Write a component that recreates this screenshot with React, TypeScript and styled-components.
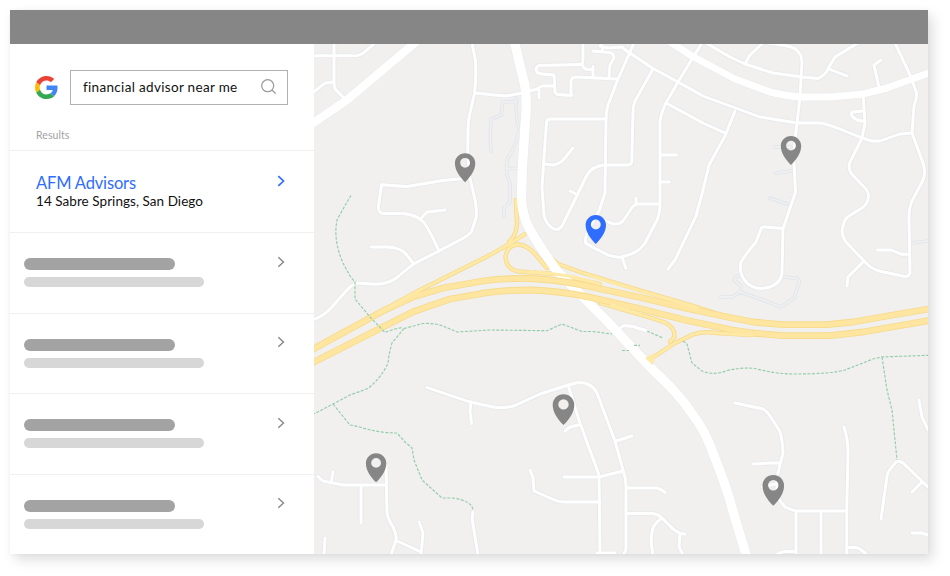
import React from "react";
import styled, { createGlobalStyle } from "styled-components";

const GlobalStyle = createGlobalStyle`
  * { box-sizing: border-box; }
  body {
    margin: 0;
    background: #fff;
    font-family: Lato, "Liberation Sans", sans-serif;
    overflow: hidden;
  }
`;

const Page = styled.div`
  height: 576px;
  padding: 10px 22px 22px 10px;
`;

const Window = styled.main`
  display: flex;
  flex-direction: column;
  height: 544px;
  background: #fff;
  box-shadow: 5px 6px 12px rgba(0, 0, 0, 0.13), 0 0 5px rgba(0, 0, 0, 0.04);
`;

const TitleBar = styled.header`
  flex: 0 0 34px;
  background: #868686;
`;

const Body = styled.div`
  flex: 1;
  display: grid;
  grid-template-columns: 304px 614px;
  min-height: 0;
`;

const Sidebar = styled.aside`
  display: flex;
  flex-direction: column;
  background: #fff;
`;

const SearchArea = styled.section`
  height: 106px;
  padding: 26px 26px 0 25px;
`;

const SearchRow = styled.div`
  display: flex;
  align-items: center;
  justify-content: space-between;
`;

const SearchBox = styled.div`
  display: flex;
  align-items: center;
  justify-content: space-between;
  width: 218px;
  height: 34.5px;
  padding: 0 11px 1px 12px;
  border: 1.5px solid #b1b1b1;
`;

const Label = styled.span<{ $size: number; $color: string; $spacing?: number; $line: number }>`
  font-size: ${(p) => p.$size}px;
  line-height: ${(p) => p.$line}px;
  letter-spacing: ${(p) => p.$spacing ?? 0}px;
  color: ${(p) => p.$color};
  white-space: nowrap;
`;

const ResultsHeading = styled.div`
  display: flex;
  padding: 23px 0 0 1px;
`;

const ResultRow = styled.article<{ $height: number; $inset: number; $top: number }>`
  display: flex;
  flex-shrink: 0;
  justify-content: space-between;
  height: ${(p) => p.$height}px;
  padding: ${(p) => p.$top}px 28px 0 ${(p) => p.$inset}px;
  border-top: 1.5px solid #f0f0f0;
`;

const Lines = styled.div<{ $gap: number }>`
  display: flex;
  flex-direction: column;
  gap: ${(p) => p.$gap}px;
`;

const Bar = styled.div<{ $width: number; $height: number; $color: string }>`
  width: ${(p) => p.$width}px;
  height: ${(p) => p.$height}px;
  border-radius: 6px;
  background: ${(p) => p.$color};
`;

const ChevronSlot = styled.div<{ $shift: number }>`
  margin-top: ${(p) => p.$shift}px;
  line-height: 0;
`;

const MapSvg = styled.svg`
  display: block;
  width: 614px;
  height: 510px;
  background: #f1f0ef;
`;

const Chevron = ({ color, width }: { color: string; width: number }) => (
  <svg width="10" height="12" viewBox="0 0 10 12" fill="none">
    <path d="M2.3 1.2 7.5 6 2.3 10.8" stroke={color} strokeWidth={width} />
  </svg>
);

const GoogleLogo = () => (
  <svg width="23" height="23" viewBox="0 0 48 48">
    <path fill="#EA4335" d="M24 9.5c3.54 0 6.71 1.22 9.21 3.6l6.85-6.85C35.9 2.38 30.47 0 24 0 14.62 0 6.51 5.38 2.56 13.22l7.98 6.19C12.43 13.72 17.74 9.5 24 9.5z" />
    <path fill="#4285F4" d="M46.98 24.55c0-1.57-.15-3.09-.38-4.55H24v9.02h12.94c-.58 2.96-2.26 5.48-4.78 7.18l7.73 6c4.51-4.18 7.09-10.36 7.09-17.65z" />
    <path fill="#FBBC05" d="M10.53 28.59c-.48-1.45-.76-2.99-.76-4.59s.27-3.14.76-4.59l-7.98-6.19C.92 16.46 0 20.12 0 24c0 3.88.92 7.54 2.56 10.78l7.97-6.19z" />
    <path fill="#34A853" d="M24 48c6.48 0 11.93-2.13 15.89-5.81l-7.73-6c-2.15 1.45-4.92 2.3-8.16 2.3-6.26 0-11.57-4.22-13.47-9.91l-7.98 6.19C6.51 42.62 14.62 48 24 48z" />
  </svg>
);

const SearchIcon = () => (
  <svg width="15" height="15" viewBox="0 0 15 15" fill="none" stroke="#9b9b9b" strokeWidth="1.25">
    <circle cx="6.7" cy="6.7" r="6" />
    <path d="m11 11 3.6 3.6" />
  </svg>
);

const streets = [
  "M314 55.7H352Q356 56.3 359 55L363 53.3 374 44",
  "M334 43V83Q334 88 336 90L344 98",
  "M314 92 323 84.5Q327 82 334 82",
  "M472 43 475.4 60Q476.2 70 475.5 82L474.5 93.5 469.5 115Q468 122 468 130L467.7 155 470 178 475.5 202Q477 213 476 218L471.5 231.7Q468 236 460 240L438 251.5 413.5 264 397 277.5Q391 282 383 283.5 376 284.5 368 283.8L358 283Q353 283.5 347 290L331 308Q325 315 314 319.5",
  "M474.5 93 505 96 523 93",
  "M468 178 443 180.5 407 186.5 381.5 184.8 378.3 207Q378.5 213.5 384 213.5H402Q415 214 423 221.5 428 227 439 251",
  "M420 219.5 427 212 445 210",
  "M371 247H388Q401 248 406 254L413 263",
  "M634 43 618 79 608 105Q606 112 606 120L605 193 599 211 588 231Q584 241 586 243.5 600 251 608 255 616 258 622 257 639 253 645 243L657 220Q660 213 660 203V122Q661 113 666 103L678 82 692 59 702 43",
  "M600 218Q608 222 613 224 620 224.5 623 221L631 209Q634 204 639 204H660M636 198V204M622 257 624 263 626 268.5",
  "M583 43V61Q583 64.5 580 64.5L539 65.5Q535 67 536.5 71 538 74 542 74L554 75 555 91Q555 94 558 94.5L572 95.5",
  "M528 91 536 89.5 542 86H554M539 89V98M571 95V82Q571 77 576 77L617 79M582 65 585 69 593 70M593 66.5V76.5",
  "M593 51 609 52.5Q614 53 614 58L610 65 609 77M601 43 603 51M600 46 608 48 622 47 630 54",
  "M624 49 653 68.5 678 82 703 96 760 117 797 123H821Q830 125 840 129L862 138 872 141H880L900 134 912 133",
  "M653 69 635 101Q633 106 633 113L631.7 162Q631 165 628 165H605Q592 166 587 175L562 226Q558 231 554 229 546 225 544 215L542 187 546.5 122Q547 119 551 119H606",
  "M544 164 553 165Q560 164 564 159L573 148M570 191 575 193.5",
  "M666 103 703 123 725 133M661 155H677M661 182H669.5",
  "M735 111 725 136 709 165 703 190 696 216 675 260 668 269",
  "M706 43 730 57 745 64 773 73 802 77 818 78.5Q826 75 829 67L835 57 858 43M829 69 847 76M745 64 750 55 763 43",
  "M768 43 785 45.5Q797 47 801 56L802 62 800 97 797 123 795 140 794 163 795.5 192 783 229 782 273Q781 283 770 287 758 291 748 284 738 274 741 262L747 253 756 242 761 229Q762 226 765 227L783 228.5",
  "M895 43 911 77 916.5 93Q917 99 914 106L912 133 923 163Q926 172 923 180L912 201Q909 208 909 217L910 273Q909 277 905 276.5L881 271.5Q872 269 868 265L846 242Q841 235 842.5 228 844 219 849 216L862 208Q870 202 868 193 867 189 860 183L851 173Q848 168 850 162L862 138 865 123 863 93",
  "M863 111 853 112Q850 113 852 116 856 121 863 121M881 60 874 65 880 92M877 250H891L902 254.3H909M863 262 848 277 847 286",
  "M427 387.5 470 402 493 407Q503 409 515 405.5L540 394 565 386 578 382.5Q592 382.5 597 393L615 441 623 470Q626 478 626 486V548Q626 552 623 555",
  "M471 402 470 411 471.5 423.5M568 385 580 423 599 475 600 555M599 477 623 471M565 431 570 427 580 424.5M616 441 632 436M564 477H599",
  "M530 470 533 478 534 491 552 499Q558 502 565 502H600M627 488H656Q661 488.5 665 492.5M627 513.5H652Q658 514 662 518L673 529 680 533.5 685 534M662 518Q652 525 652 533 650 540 653 555M680 534 679 547 683 555M597 553H615",
  "M318 476.5 323 481 343 485H386M333 472 331.5 481M361 486V523M386 465 387 513Q388 519 393 527 397 536 396 540L391 555M396 540.5 421 552M419 522 423 533 421 555M325 538 324 555",
  "M473 512 472 518 478 555M735 403 763 409Q767 411 772 419L779 430Q782 435 783 453L777 477 777 497 785 507 795 511H847M753 464 780 462.7M762 487 775 484",
  "M796 511V555M821 511V555M844 427Q848 440 848 452L846.7 511V555M776 555Q781 551.5 786 551.5H796M847 547.5H856Q860 548 867 555",
  "M881 519 886.5 480Q887 472 891 468L897 461Q900 461 903 463L928 487M922 482 912 492M912 533H922L928 535M919 400 922 417 928 430",
  "M618 333Q618 328 624 325.5L633 326.5 647 331",
];

const arterials = [
  { d: "M309 126 347 100 417 41", w: 8.2 },
  { d: "M664 38 692 56 735 79 770 92Q785 96 802 97H830L863 94 887 88 930 72.5", w: 7 },
  { d: "M514 40 523 78Q527 90 526 112L522.5 165 521.5 195Q521 213 530 230 540 247 557 271L606 320 653 370Q678 393 691 412 706 432 713 453 728 491 732 508L747 558", w: 9.4 },
];

const alleys = [
  "M517 101.5 502.5 102 501.5 115 491 119.5Q489.5 137 491 151",
  "M515.5 97 517 120 519.5 131 513.5 148 507 160V175L510 184V202L504 208V216M507 168.5H518",
  "M775 147H791M776 173 793 171M770 198 790 205M911 243 928 241",
  "M782 277 796 278Q800 279 799 284L794 298 781 307 760 299 740 292 732 297H720M740 292Q742 288 740 285L735 281Q733 276 740 276",
];

const ramps = [
  "M515.8 200 517 224Q516 236 509 242",
  "M380 312 420 290 490 255 511 243 525 234",
  "M547 268 535 254Q527 245 518 244.5 507 245 505.5 257 506 269 518 271.5L555 274 600 284",
  "M547 255 558 264 580 272 637 289.5 697 307 724 316",
  "M600 303 653 318.5 665 322.5Q675 327 674.5 337L670 342",
  "M649 360 675 343 693 334.5Q703 331 717 333L752 335",
];

const mergeLanes = [
  "M420 290 378 313",
  "M600 284 575 277 555 274 530 271.5",
  "M590 276 637 290 697 308",
  "M612 305 640 314",
  "M722 333.5 752 335",
];

const motorways = [
  "M308 352 382 311.5 413 297 443 288 483 281Q505 278 530 278.5 560 280 587 286L643 298 687 308.5 730 317.5 753 322 783 324.7H827L853 322 893 315 932 308.5",
  "M308 365 413 311.7 450 299 487 292.7Q505 290 530 290 560 291 587 296.7L637 308 687 320.5 730 329.5 752 333 783 335.7H830L863 332 932 320",
];

const trails = [
  "M351 195.5Q344 207 337 220 333 240 343 263L350 276 355 282V299L370 317 385 332.5 395 329 402 327.5",
  "M404 328.5 423 323.5Q435 323 443 326L457 332 490 330 547 330.7 562 324 582 331.5H593L612 334",
  "M647 331 663 338M683 341 687 344 692 363 702 371Q715 376 727 370.5 742 367 755 368.5 775 374 795 374 830 374 845 370L873 359 882 357 928 355.3M882 357 887 390 892 410 897 460",
  "M404 328.5 392 343Q389 353 388 363 382 377 368 388.5L350 395 314 414M333 404 350 425 358 426.5Q378 433 397 433L405 442 412 448 414 460 422 480 442 498H453Q473 501 473 511",
  "M622 350.5H629M634 345.3H640",
];

const pins = [
  { x: 465.1, y: 153.2, s: 1, color: "#868686" },
  { x: 595.8, y: 214.9, s: 1, color: "#2f6dff" },
  { x: 791, y: 136, s: 1, color: "#868686" },
  { x: 376.1, y: 453.3, s: 1, color: "#868686" },
  { x: 563.5, y: 394.2, s: 1.06, color: "#868686" },
  { x: 773.3, y: 475.1, s: 1.06, color: "#868686" },
];

const Paths = ({ list, stroke, width }: { list: string[]; stroke: string; width: number }) => (
  <g fill="none" stroke={stroke} strokeWidth={width} strokeLinecap="round" strokeLinejoin="round">
    {list.map((d) => <path key={d} d={d} />)}
  </g>
);

const AreaMap = () => (
  <MapSvg viewBox="314 44 614 510">
    <Paths list={alleys} stroke="#e1e5e9" width={3.6} />
    <Paths list={alleys} stroke="#eff0f1" width={1.8} />
    <Paths list={streets} stroke="#e7e9ec" width={4.7} />
    {arterials.map((a) => <Paths key={a.d} list={[a.d]} stroke="#e8eaec" width={a.w + 1.2} />)}
    <Paths list={streets} stroke="#fff" width={2.9} />
    <Paths list={ramps} stroke="#f5d889" width={4.3} />
    <Paths list={ramps} stroke="#ffe9a6" width={2.8} />
    {arterials.map((a) => <Paths key={a.d} list={[a.d]} stroke="#fff" width={a.w} />)}
    <path d="M645 358 653 353.5 655 359 652.5 365Z" fill="#ffe9a6" />
    <Paths list={motorways} stroke="#f6da8d" width={6.8} />
    <Paths list={motorways} stroke="#fee6a0" width={5.1} />
    <Paths list={mergeLanes} stroke="#ffe9a6" width={2.8} />
    <g fill="none" stroke="#92cda8" strokeWidth="1.15" strokeDasharray="3 1.5">
      {trails.map((d) => <path key={d} d={d} />)}
    </g>
    {pins.map((p) => (
      <path
        key={p.x}
        transform={`translate(${p.x} ${p.y}) scale(${p.s})`}
        fill={p.color}
        fillRule="evenodd"
        d="M0 0C-5.8 0-10.2 4.4-10.2 10.1-10.2 17-5.2 24 0 29 5.2 24 10.2 17 10.2 10.1 10.2 4.4 5.8 0 0 0ZM0 4.7A4.9 4.9 0 1 1 0 14.5 4.9 4.9 0 1 1 0 4.7Z"
      />
    ))}
  </MapSvg>
);

const placeholderHeights = [80.5, 80.5, 80.5, 80.5];

export default function App() {
  return (
    <Page>
      <GlobalStyle />
      <Window>
        <TitleBar />
        <Body>
          <Sidebar>
            <SearchArea>
              <SearchRow>
                <GoogleLogo />
                <SearchBox>
                  <Label $size={13.5} $line={20} $color="#111" $spacing={0.32}>financial advisor near me</Label>
                  <SearchIcon />
                </SearchBox>
              </SearchRow>
              <ResultsHeading>
                <Label $size={10.5} $line={14} $color="#a3a3a3" $spacing={0.05}>Results</Label>
              </ResultsHeading>
            </SearchArea>
            <ResultRow $height={82} $inset={26} $top={22}>
              <Lines $gap={0}>
                <Label $size={16.5} $line={20} $color="#2f6dff" $spacing={-0.16}>AFM Advisors</Label>
                <Label $size={13.5} $line={17} $color="#111" $spacing={0.05}>14 Sabre Springs, San Diego</Label>
              </Lines>
              <ChevronSlot $shift={2}><Chevron color="#2f6dff" width={1.7} /></ChevronSlot>
            </ResultRow>
            {placeholderHeights.map((h, i) => (
              <ResultRow key={i} $height={h} $inset={14} $top={25}>
                <Lines $gap={7}>
                  <Bar $width={151} $height={12} $color="#a3a3a3" />
                  <Bar $width={180} $height={10} $color="#d7d7d7" />
                </Lines>
                <ChevronSlot $shift={-2.5}><Chevron color="#868686" width={1.4} /></ChevronSlot>
              </ResultRow>
            ))}
          </Sidebar>
          <AreaMap />
        </Body>
      </Window>
    </Page>
  );
}
